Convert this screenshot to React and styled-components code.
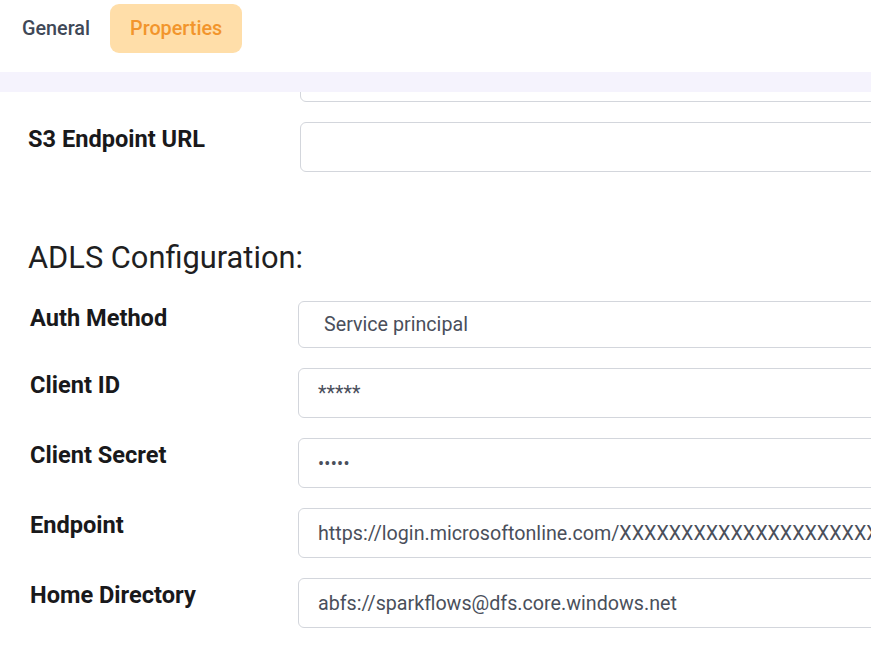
import React from "react";
import styled, { createGlobalStyle } from "styled-components";

const Global = createGlobalStyle`
  html, body { margin: 0; padding: 0; background: #ffffff; overflow: hidden; }
  body { font-family: Roboto, "Noto Sans", Arial, sans-serif; }
  * { box-sizing: border-box; }
`;

const Page = styled.div`
  width: 871px;
  height: 670px;
  overflow: hidden;
  background: #ffffff;
`;

const TabBar = styled.div`
  display: flex;
  align-items: flex-start;
  height: 72px;
  padding: 4px 0 0 2px;
`;

const Tab = styled.button`
  border: none;
  margin: 0;
  font-family: Roboto, Arial, sans-serif;
  font-size: 19.8px;
  font-weight: 500;
  line-height: 25px;
  padding: 12px 20px;
  border-radius: 9px;
  cursor: pointer;
  background: ${(p) => (p.$active ? "#FFDEA9" : "transparent")};
  color: ${(p) => (p.$active ? "#F2952C" : "#404857")};
`;

const Strip = styled.div`
  height: 20px;
  background: #F5F3FD;
`;

const Viewport = styled.div`
  height: 578px;
  overflow: hidden;
`;

const Scroller = styled.div`
  width: 1200px;
  margin-top: -40px;
`;

const Section = styled.section`
  display: flex;
  flex-direction: column;
  gap: 20px;
  padding-left: ${(p) => p.$indent}px;
`;

const Row = styled.div`
  display: grid;
  grid-template-columns: ${(p) => p.$col}px 1fr;
  align-items: start;
`;

const Label = styled.label`
  margin-top: 3px;
  font-family: Roboto, Arial, sans-serif;
  font-size: 23.6px;
  font-weight: 700;
  line-height: 28px;
  color: #19191b;
`;

const Field = styled.div`
  height: ${(p) => p.$h || 50}px;
  border: 1px solid #D3D6DC;
  border-radius: 6px;
  display: flex;
  align-items: center;
  padding-left: ${(p) => p.$pad || 19}px;
  font-family: Roboto, Arial, sans-serif;
  font-size: 19.7px;
  color: #4A4F5B;
  white-space: nowrap;
  overflow: hidden;
  background: #fff;
`;

const Heading = styled.h2`
  margin: 68px 0 25px 28px;
  font-family: Roboto, Arial, sans-serif;
  font-size: 30.8px;
  font-weight: 400;
  line-height: 36px;
  color: #1f1f22;
`;

const Dots = styled.span`
  letter-spacing: 0.3px;
  font-size: 18px;
`;

const adlsRows = [
  { label: "Client ID", value: "*****" },
  { label: "Client Secret", value: "•••••", dots: true },
  {
    label: "Endpoint",
    value:
      "https://login.microsoftonline.com/XXXXXXXXXXXXXXXXXXXXXXXXXXXXXXXXXXXX/oauth2/token",
  },
  { label: "Home Directory", value: "abfs://sparkflows@dfs.core.windows.net" },
];

export default function App() {
  return (
    <Page>
      <Global />
      <TabBar>
        <Tab>General</Tab>
        <Tab $active>Properties</Tab>
      </TabBar>
      <Strip />
      <Viewport>
        <Scroller>
          <Section $indent={28}>
            <Row $col={272}>
              <Label />
              <Field />
            </Row>
            <Row $col={272}>
              <Label>S3 Endpoint URL</Label>
              <Field />
            </Row>
          </Section>
          <Heading>ADLS Configuration:</Heading>
          <Section $indent={30}>
            <Row $col={268}>
              <Label>Auth Method</Label>
              <Field $h={47} $pad={25}>Service principal</Field>
            </Row>
            {adlsRows.map((r) => (
              <Row $col={268} key={r.label}>
                <Label>{r.label}</Label>
                <Field>{r.dots ? <Dots>{r.value}</Dots> : r.value}</Field>
              </Row>
            ))}
          </Section>
        </Scroller>
      </Viewport>
    </Page>
  );
}
